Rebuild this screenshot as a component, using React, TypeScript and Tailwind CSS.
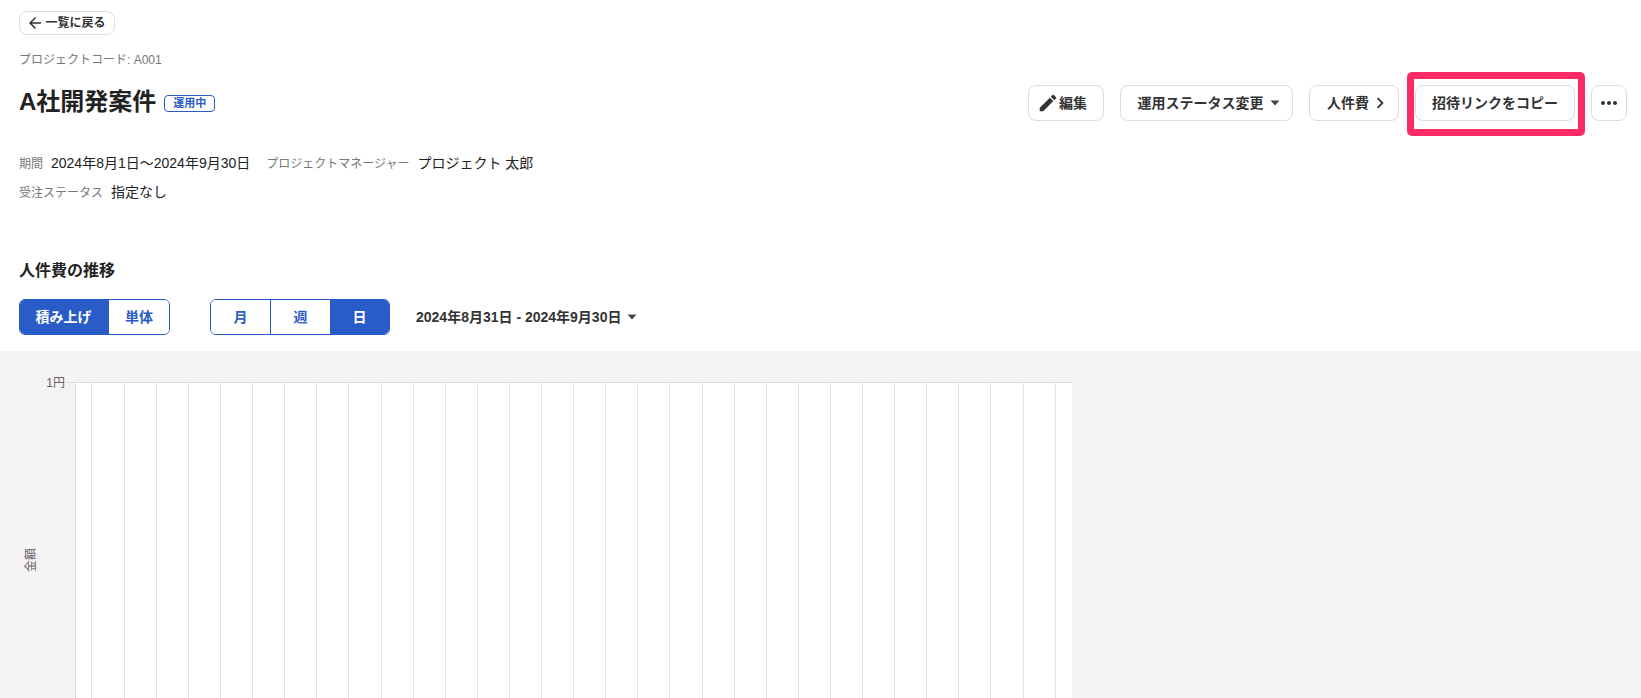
import { MdArrowBack, MdChevronRight, MdEdit, MdMoreHoriz } from 'react-icons/md'

const fontStack = "font-['Liberation_Sans','Noto_Sans_CJK_JP',sans-serif]"

// 縦グリッド線のx座標
const gridXs = [91, ...Array.from({ length: 30 }, (_, i) => Math.floor(124.2 + 32.1 * i))]

function Caret() {
  return (
    <svg width="10" height="6" viewBox="0 0 10 6" className="shrink-0" aria-hidden="true">
      <path d="M0.5 0.5h9L5 5.5z" fill="#444" />
    </svg>
  )
}

function HeaderButton({ className, children }: { className: string; children: React.ReactNode }) {
  return (
    <button className={`flex h-9 items-center justify-center rounded-lg border border-[#dcdcdc] bg-white text-sm font-bold text-[#333] ${className}`}>
      {children}
    </button>
  )
}

function Meta({ label, value }: { label: string; value: string }) {
  return (
    <div className="flex items-center gap-2">
      <span className="mt-0.5 text-xs text-[#777]">{label}</span>
      <span className="text-sm text-[#222]">{value}</span>
    </div>
  )
}

function Segment({ label, active, className }: { label: string; active?: boolean; className: string }) {
  return (
    <div className={`flex items-center justify-center text-sm font-bold ${active ? 'bg-[#2a5cc8] text-white' : 'bg-white text-[#2a5cc8]'} ${className}`}>
      {label}
    </div>
  )
}

export default function App() {
  return (
    <div className={`flex h-[698px] w-full flex-col overflow-hidden bg-white ${fontStack}`}>
      <div className="pl-[19px] pt-[11px]">
        <button className="flex h-6 w-24 items-center justify-center gap-px rounded-lg border border-[#dcdcdc] text-xs font-bold text-[#333]">
          <MdArrowBack size={18} className="-ml-0.5" />
          一覧に戻る
        </button>
        <p className="mt-4 text-xs leading-[18px] text-[#777]">プロジェクトコード: A001</p>
      </div>

      <div className="mt-4 flex h-9 items-center justify-between pl-[19px] pr-[14px]">
        <div className="-mt-[3px] flex items-center gap-2">
          <h1 className="text-2xl font-bold text-[#222]">A社開発案件</h1>
          <span className="mt-[3px] flex h-[17px] w-[51px] items-center justify-center rounded border border-[#2a5cc8] text-[11px] font-bold text-[#2a5cc8]">運用中</span>
        </div>
        <div className="flex items-center gap-4">
          <HeaderButton className="w-[76px] pr-1.5">
            <MdEdit size={22} className="-ml-0.5" />
            編集
          </HeaderButton>
          <HeaderButton className="w-[173px] gap-1.5 pl-1">
            運用ステータス変更
            <Caret />
          </HeaderButton>
          <HeaderButton className="w-[90px] pl-1.5">
            人件費
            <MdChevronRight size={22} className="-mr-1" />
          </HeaderButton>
          <div className="relative">
            <HeaderButton className="w-40">招待リンクをコピー</HeaderButton>
            <div className="absolute -bottom-[15px] -left-2 -right-2.5 -top-[13px] rounded-[5px] border-[7px] border-[#fb2b68]" />
          </div>
          <HeaderButton className="w-9">
            <MdMoreHoriz size={24} />
          </HeaderButton>
        </div>
      </div>

      <div className="mt-[31px] flex flex-col gap-2 pl-[19px]">
        <div className="flex h-[21px] items-center gap-4">
          <Meta label="期間" value="2024年8月1日～2024年9月30日" />
          <Meta label="プロジェクトマネージャー" value="プロジェクト 太郎" />
        </div>
        <div className="flex h-[21px] items-center">
          <Meta label="受注ステータス" value="指定なし" />
        </div>
      </div>

      <h2 className="mt-[57px] pl-[19px] text-base font-bold leading-6 text-[#222]">人件費の推移</h2>

      <div className="mt-[16px] flex h-9 items-center pl-[19px]">
        <div className="flex h-9 w-[151px] overflow-hidden rounded-md border border-[#2a5cc8]">
          <Segment label="積み上げ" active className="w-[89px] pr-0.5" />
          <Segment label="単体" className="flex-1" />
        </div>
        <div className="ml-10 flex h-9 w-[180px] overflow-hidden rounded-md border border-[#2a5cc8]">
          <Segment label="月" className="flex-1 border-r border-[#2a5cc8]" />
          <Segment label="週" className="flex-1" />
          <Segment label="日" active className="flex-1" />
        </div>
        <div className="ml-[26px] flex items-center gap-1.5 text-sm font-bold text-[#333]">
          2024年8月31日 - 2024年9月30日
          <Caret />
        </div>
      </div>

      <div className="mt-4 flex-1 bg-[#f5f3f4]">
        <svg width="1080" height="347" viewBox="0 0 1080 347" className="block">
          <rect x="75" y="31" width="997" height="316" fill="#fff" />
          <path d="M66 31.5H1072" stroke="#dfdfdf" />
          <path d="M75.5 31V347" stroke="#dfdfdf" />
          {gridXs.map((x) => (
            <path key={x} d={`M${x + 0.5} 31V347`} stroke="#e2e2e2" />
          ))}
          <text x="65" y="35.5" textAnchor="end" fontSize="12" fill="#666">1円</text>
          <text transform="translate(35 209) rotate(-90)" textAnchor="middle" fontSize="12" fill="#666">金額</text>
        </svg>
      </div>
    </div>
  )
}
